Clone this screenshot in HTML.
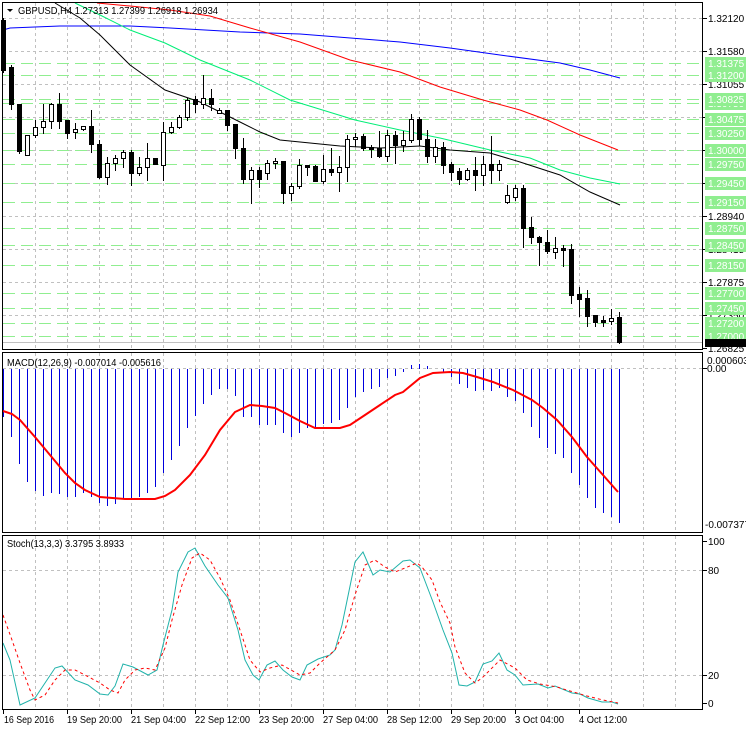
<!DOCTYPE html>
<html><head><meta charset="utf-8"><style>
html,body{margin:0;padding:0;background:#fff;}
svg{display:block;}
text{font-family:"Liberation Sans",sans-serif;font-size:10px;}
</style></head><body>
<svg id="s" width="746" height="731" viewBox="0 0 746 731" xmlns="http://www.w3.org/2000/svg">
<rect width="746" height="731" fill="#fff"/>
<g id="grid"></g>
<g id="levels"></g>
<g id="ma" fill="none"></g>
<g id="candles"></g>
<g id="macd"></g>
<g id="stoch" fill="none"></g>
<g id="frames" fill="none" stroke="#000" stroke-width="1">
<rect x="2.5" y="2.5" width="700" height="347"/>
<rect x="2.5" y="352.5" width="700" height="180"/>
<rect x="2.5" y="535.5" width="700" height="174"/>
</g>
<g id="axis"></g>
<polygon points="7,9 13,9 10,12" fill="#000"/>
<text x="18" y="14" fill="#000" textLength="200" lengthAdjust="spacingAndGlyphs">GBPUSD,H4  1.27313 1.27399 1.26918 1.26934</text>
<text x="7" y="366" fill="#000" textLength="154" lengthAdjust="spacingAndGlyphs">MACD(12,26,9) -0.007014 -0.005616</text>
<text x="7" y="547" fill="#000" textLength="117" lengthAdjust="spacingAndGlyphs">Stoch(13,3,3) 3.3795 3.8933</text>
<g fill="#000" id="ax">
<text x="708" y="22">1.32120</text>
<text x="708" y="55">1.31580</text>
<text x="708" y="88">1.31055</text>
<text x="708" y="220">1.28940</text>
<text x="708" y="253">1.28415</text>
<text x="708" y="286">1.27875</text>
<text x="708" y="319">1.27350</text>
<text x="708" y="352">1.26825</text>
<text x="707" y="364">0.000603</text>
<text x="707" y="372">0.00</text>
<text x="705" y="528">-0.007377</text>
<text x="708" y="545">100</text>
<text x="708" y="574">80</text>
<text x="708" y="679">20</text>
<text x="708" y="707">0</text>
</g>
<g id="glab"></g>
<g fill="#000">
<text x="4" y="723" textLength="50" lengthAdjust="spacingAndGlyphs">16 Sep 2016</text>
<text x="67" y="723" textLength="55" lengthAdjust="spacingAndGlyphs">19 Sep 20:00</text>
<text x="131" y="723" textLength="55" lengthAdjust="spacingAndGlyphs">21 Sep 04:00</text>
<text x="195" y="723" textLength="55" lengthAdjust="spacingAndGlyphs">22 Sep 12:00</text>
<text x="259" y="723" textLength="55" lengthAdjust="spacingAndGlyphs">23 Sep 20:00</text>
<text x="323" y="723" textLength="55" lengthAdjust="spacingAndGlyphs">27 Sep 04:00</text>
<text x="387" y="723" textLength="55" lengthAdjust="spacingAndGlyphs">28 Sep 12:00</text>
<text x="451" y="723" textLength="55" lengthAdjust="spacingAndGlyphs">29 Sep 20:00</text>
<text x="515" y="723" textLength="49" lengthAdjust="spacingAndGlyphs">3 Oct 04:00</text>
<text x="579" y="723" textLength="48" lengthAdjust="spacingAndGlyphs">4 Oct 12:00</text>
</g>
</svg>
<script>
var NS="http://www.w3.org/2000/svg";
function el(p,t,a){var e=document.createElementNS(NS,t);for(var k in a)e.setAttribute(k,a[k]);document.getElementById(p).appendChild(e);return e;}
for(var k=1;k<=21;k++){var x=3+32*k+0.5;
 [[3,349],[353,532],[536,709]].forEach(function(r){el("grid","line",{x1:x,y1:r[0],x2:x,y2:r[1],stroke:"#c0c0c0","stroke-dasharray":"3,3"});});}
[18,51,84,117,150,183,216,249,282,315].forEach(function(y){el("grid","line",{x1:3,y1:y+.5,x2:702,y2:y+.5,stroke:"#c0c0c0","stroke-dasharray":"3,3"});el("axis","line",{x1:703,y1:y+.5,x2:707,y2:y+.5,stroke:"#000"});});
el("axis","line",{x1:703,y1:348.5,x2:707,y2:348.5,stroke:"#000"});
el("grid","line",{x1:3,y1:368.5,x2:702,y2:368.5,stroke:"#c0c0c0","stroke-dasharray":"3,3"});
[570,675].forEach(function(y){el("grid","line",{x1:3,y1:y+.5,x2:702,y2:y+.5,stroke:"#c0c0c0","stroke-dasharray":"3,3"});el("axis","line",{x1:703,y1:y+.5,x2:707,y2:y+.5,stroke:"#000"});});
[541,703,368].forEach(function(y){el("axis","line",{x1:703,y1:y+.5,x2:707,y2:y+.5,stroke:"#000"});});
[3,67,131,195,259,323,387,451,515,579].forEach(function(x){el("axis","line",{x1:x+.5,y1:710,x2:x+.5,y2:714,stroke:"#000"});});
var lv=[[63,"1.31375"],[75,"1.31200"],[103,"1.30750"],[99,"1.30825"],[119,"1.30475"],[133,"1.30250"],[150,"1.30000"],[164,"1.29750"],[183,"1.29450"],[202,"1.29150"],[228,"1.28750"],[245,"1.28450"],[265,"1.28150"],[293,"1.27700"],[308,"1.27450"],[323,"1.27200"],[336,"1.27000"]];
lv.forEach(function(l){el("levels","line",{x1:3,y1:l[0]+.5,x2:702,y2:l[0]+.5,stroke:"#90ee90","stroke-dasharray":"12,6"});
 el("glab","rect",{x:705,y:l[0]-6,width:41,height:13,fill:"#90ee90"});
 var t=el("glab","text",{x:708,y:l[0]+4,fill:"#fff"});t.textContent=l[1];});
el("levels","line",{x1:3,y1:342.5,x2:702,y2:342.5,stroke:"#c0c0c0"});
el("glab","rect",{x:705,y:339,width:41,height:8,fill:"#000"});
function pl(g,pts,c,w,d){var a={points:pts.map(function(p){return p.join(",")}).join(" "),stroke:c,"stroke-width":w||1,fill:"none"};if(d)a["stroke-dasharray"]=d;el(g,"polyline",a);}
pl("ma",[[3,30],[10,28],[60,26],[130,26],[170,28],[240,32],[300,34],[400,42],[450,48],[500,55],[560,63],[590,70],[620,78]],"#0000ff");
pl("ma",[[97,3],[130,6],[170,10],[210,16],[250,28],[300,42],[350,60],[400,72],[440,87],[483,100],[520,110],[547,120],[580,135],[618,150]],"#ff0000");
pl("ma",[[75,3],[100,15],[130,30],[165,43],[200,60],[250,80],[290,100],[355,120],[400,130],[440,138],[490,150],[530,158],[560,170],[590,178],[620,184]],"#00ee77");
pl("ma",[[55,3],[80,18],[100,35],[130,65],[165,90],[200,102],[220,112],[240,122],[260,132],[280,140],[300,142],[340,146],[380,148],[420,146],[450,150],[490,153],[520,162],[560,175],[590,192],[620,205]],"#000");
var C=[[18,72,20,70,0],[65,109,67,104,0],[104,153,104,151,0],[135,155,135,155,1],[120,137,127,135,1],[104,133,121,127,1],[103,128,104,121,1],[93,128,104,121,0],[120,138,120,133,0],[123,138,129,132,1],[126,130,126,129,1],[110,152,126,144,0],[140,178,144,177,0],[157,184,163,177,1],[155,170,158,163,1],[150,167,152,158,1],[150,185,152,173,0],[157,175,167,173,1],[143,180,158,167,1],[158,164,158,164,0],[122,180,132,165,1],[122,133,127,132,1],[115,128,117,127,1],[98,120,100,117,1],[96,112,99,104,0],
[75,108,98,104,1],[89,110,98,104,0],[108,113,110,113,1],[110,130,110,125,0],[124,158,124,148,0],[138,183,148,179,0],[167,203,170,179,1],[167,187,170,179,0],[160,179,163,173,1],[158,168,161,163,1],[161,203,161,193,0],[183,200,186,193,1],[159,188,165,186,1],[165,175,165,167,0],[165,181,166,181,0],[155,183,169,181,1],[148,175,169,172,0],[156,191,167,172,1],[135,181,139,167,1],[133,146,137,139,1],[134,150,136,148,0],[145,157,147,149,0],[131,157,148,156,0],[130,161,135,156,1],[131,163,135,145,0],[131,151,140,145,1],[114,142,119,140,1],[117,145,119,139,0],[130,162,139,156,0],[139,162,147,156,1],
[142,173,147,165,0],[162,180,164,172,0],[168,184,171,179,0],[168,180,170,179,1],[157,190,170,175,0],[156,185,164,175,1],[136,183,164,170,0],[160,180,164,170,1],[185,203,195,202,1],[185,200,188,197,1],[185,247,188,228,0],[217,243,227,237,0],[236,265,237,242,0],[230,253,242,251,0],[237,258,248,252,1],[245,266,248,250,0],[244,303,249,295,0],[287,316,294,299,0],[290,326,298,316,0],[315,326,315,322,0],[316,326,320,322,0],[309,324,318,321,1],[312,343,317,342,0]];
C.forEach(function(c,i){var x=3+8*i;
 el("candles","line",{x1:x+.5,y1:c[0],x2:x+.5,y2:c[1]+1,stroke:"#000"});
 var h=Math.max(c[3]-c[2],1);
 if(c[4])el("candles","rect",{x:x-1.5,y:c[2]+.5,width:4,height:h,fill:"#fff",stroke:"#000"});
 else el("candles","rect",{x:x-2,y:c[2],width:5,height:h+1,fill:"#000"});});
var H=[417,437,464,482,491,496,493,494,497,497,493,497,503,506,504,499,499,497,493,487,473,460,446,428,416,404,395,389,389,396,417,417,425,425,425,433,437,433,428,428,424,423,420,408,397,392,389,387,378,376,372,365,364,366,369,372,377,384,388,391,390,391,388,397,401,413,427,438,448,454,458,473,485,498,508,513,517,523];
H.forEach(function(v,i){var x=3+8*i+.5;el("macd","line",{x1:x,y1:369,x2:x,y2:v,stroke:"#0000dd"});});
pl("macd",[[3,411],[12,414],[20,420],[35,437],[50,455],[65,473],[75,483],[85,490],[100,497],[125,499],[155,499],[165,496],[175,490],[190,475],[205,455],[220,430],[235,412],[250,405],[262,406],[275,408],[285,413],[300,421],[315,428],[340,428],[350,425],[365,415],[380,405],[395,395],[403,392],[420,378],[433,373],[450,372],[463,373],[477,377],[493,382],[513,390],[532,400],[543,408],[557,420],[572,437],[587,457],[603,475],[618,492]],"#ff0000",2);
pl("stoch",[[3,643],[10,660],[20,705],[35,698],[45,683],[55,668],[62,666],[75,680],[88,685],[100,694],[108,695],[115,686],[123,664],[133,667],[148,675],[157,670],[163,645],[172,610],[178,572],[188,552],[195,548],[205,566],[218,585],[228,598],[238,630],[245,660],[253,675],[259,680],[267,665],[275,661],[283,670],[292,677],[300,680],[307,665],[318,659],[330,655],[335,650],[342,625],[355,562],[363,552],[373,575],[380,570],[390,572],[403,561],[410,560],[420,568],[433,602],[443,630],[452,653],[459,685],[467,686],[475,682],[483,664],[492,661],[499,653],[507,670],[515,675],[523,685],[538,684],[548,688],[555,686],[572,693],[580,694],[588,698],[602,702],[612,702],[618,704]],"#20b2aa");
pl("stoch",[[3,615],[12,640],[20,663],[30,690],[35,700],[45,695],[55,680],[65,670],[75,670],[85,675],[100,683],[110,690],[118,693],[125,680],[135,670],[145,668],[155,670],[165,648],[172,620],[182,585],[192,558],[200,553],[210,560],[220,578],[230,600],[240,630],[250,660],[260,672],[270,668],[282,665],[300,675],[310,673],[320,663],[335,650],[345,630],[355,595],[365,565],[375,560],[385,567],[395,572],[405,568],[417,563],[422,567],[432,580],[440,602],[450,623],[455,647],[465,673],[475,683],[482,678],[500,660],[515,668],[527,680],[540,684],[557,687],[570,691],[587,696],[603,700],[618,703]],"#ff0000",1,"3,3");
</script>
</body></html>
